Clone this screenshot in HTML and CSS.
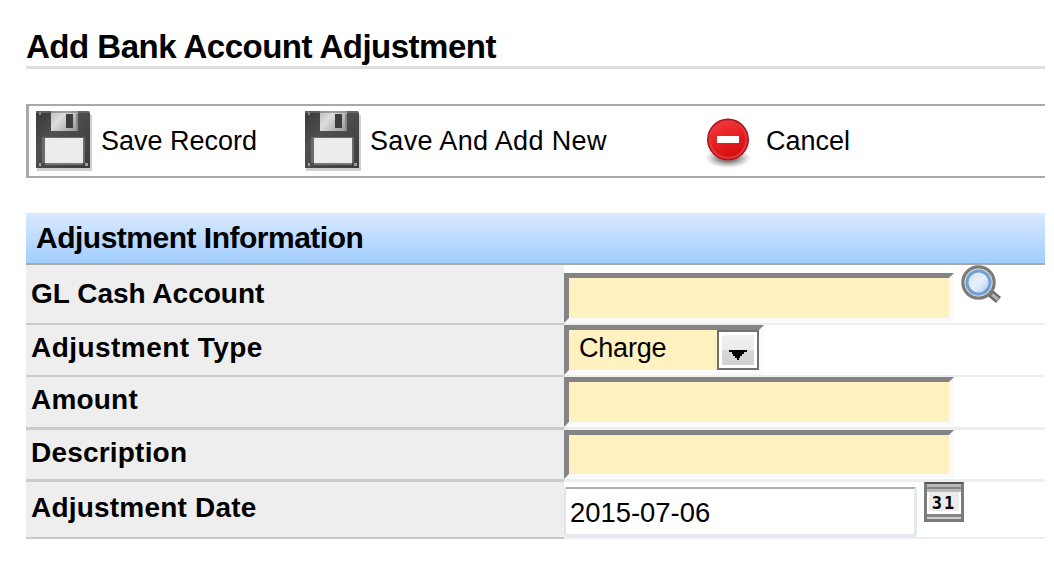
FILE: index.html
```
<!DOCTYPE html>
<html lang="en">
<head>
  <meta charset="UTF-8" />
  <meta name="viewport" content="width=device-width, initial-scale=1.0" />
  <title>Add Bank Account Adjustment</title>
  <link rel="stylesheet" href="styles.css">
</head>
<body>
  <svg class="defs" width="0" height="0">
    <defs>
      <linearGradient id="shutter" x1="0" x2="1" y1="0" y2="0.6">
        <stop offset="0" stop-color="#bdbdbd" />
        <stop offset="0.4" stop-color="#dcdcda" />
        <stop offset="1" stop-color="#a5a5a5" />
      </linearGradient>
      <linearGradient id="disk" x1="0" x2="1" y1="0" y2="1">
        <stop offset="0" stop-color="#383838" />
        <stop offset="0.35" stop-color="#505050" />
        <stop offset="1" stop-color="#3c3c3c" />
      </linearGradient>
      <symbol id="floppy" viewBox="0 0 57 60">
        <path d="M1 4H56V60H1z" fill="#c4c4c4" opacity=".8" />
        <path d="M0 0H52L54 2V57H0z" fill="url(#disk)" />
        <path d="M15 0H42V20H15z" fill="url(#shutter)" />
        <path d="M0 0H54V2H0z" fill="#777" opacity=".6" />
        <path d="M3 1h2v3H3zM40 3h2v17h-2z" fill="#888" />
        <path d="M30 3H37V17H30z" fill="#3d3d3d" />
        <path d="M6 26H49V52H6z" fill="#6b6b6b" />
        <path d="M9 27H47V52H9z" fill="#ececec" />
        <path d="M9 52H47V54H9z" fill="#777" />
        <path d="M3 52h2v3H3zM49 52h3v3h-3z" fill="#a0a0a0" />
      </symbol>
    </defs>
  </svg>

  <div class="page">
    <h1>Add Bank Account Adjustment</h1>

    <div class="toolbar">
      <a class="tool save">
        <svg width="57" height="60"><use href="#floppy" /></svg>
        <span>Save Record</span>
      </a>
      <a class="tool save-new">
        <svg width="57" height="60"><use href="#floppy" /></svg>
        <span>Save And Add New</span>
      </a>
      <a class="tool cancel">
        <svg width="48" height="52" viewBox="0 0 48 52">
          <defs>
            <linearGradient id="red" x1="0" x2="0.4" y1="0" y2="1">
              <stop offset="0" stop-color="#f63a3a" />
              <stop offset="1" stop-color="#d90d12" />
            </linearGradient>
            <radialGradient id="shade">
              <stop offset="0.4" stop-color="#555" stop-opacity=".7" />
              <stop offset="1" stop-color="#888" stop-opacity="0" />
            </radialGradient>
          </defs>
          <ellipse cx="24" cy="41" rx="23" ry="10" fill="url(#shade)" />
          <circle cx="24" cy="22.500" r="21" fill="#b5151a" />
          <circle cx="24" cy="22.500" r="18.300" fill="url(#red)" stroke="#de3a3d" stroke-width="2" />
          <path d="M13 19H35V26H13z" fill="#fff" />
        </svg>
        <span>Cancel</span>
      </a>
    </div>

    <form class="section">
      <h2>Adjustment Information</h2>

      <div class="row account">
        <label>GL Cash Account</label>
        <div class="value">
          <input class="field" type="text" />
          <svg class="search" width="41" height="40" viewBox="0 0 41 40">
            <defs>
              <linearGradient id="lens" x1="0" x2="1" y1="0" y2="1">
                <stop offset="0" stop-color="#c9ddf3" />
                <stop offset="0.5" stop-color="#e9f1fb" />
                <stop offset="1" stop-color="#a9c7ea" />
              </linearGradient>
            </defs>
            <path d="M28 27L37.500 35" stroke="#6c6c68" stroke-width="8" />
            <path d="M31 29.500L37 34.500" stroke="#b4b4b0" stroke-width="3" />
            <circle cx="17.500" cy="17.500" r="15.500" fill="#fff" stroke="#7b7b77" stroke-width="3.500" />
            <circle cx="17.500" cy="17.500" r="13.300" fill="none" stroke="#d5d5d2" stroke-width="1.500" />
            <circle cx="17.500" cy="17.500" r="11.500" fill="url(#lens)" stroke="#719fd4" stroke-width="3" />
          </svg>
        </div>
      </div>

      <div class="row type">
        <label>Adjustment Type</label>
        <div class="value">
          <div class="select">
            <span>Charge</span>
            <div class="arrow">
              <svg width="18" height="10" viewBox="0 0 18 10">
                <path d="M0 0H18V2H15V4H13V6H11V8H10V10H8V8H6V6H4V4H3V2H0z" />
              </svg>
            </div>
          </div>
        </div>
      </div>

      <div class="row amount">
        <label>Amount</label>
        <div class="value"><input class="field" type="text" /></div>
      </div>

      <div class="row description">
        <label>Description</label>
        <div class="value"><input class="field" type="text" /></div>
      </div>

      <div class="row date">
        <label>Adjustment Date</label>
        <div class="value">
          <input class="date-field" type="text" value="2015-07-06" />
          <div class="calendar"><span>31</span></div>
        </div>
      </div>
    </form>
  </div>
</body>
</html>
```
FILE: styles.css
```
* {
  box-sizing: border-box;
}

body {
  margin: 0;
  background: #fff;
  color: #000;
  font-family: "Liberation Sans", Arial, sans-serif;
  overflow: hidden;
}

.defs {
  display: block;
}

.page {
  margin: 28px 9px 0 26px;
}

h1 {
  height: 41px;
  margin: 0 0 35px;
  border-bottom: 3px solid #ddd;
  font-size: 33px;
  line-height: 38px;
  letter-spacing: -0.5px;
  white-space: nowrap;
}

.toolbar {
  display: flex;
  height: 74px;
  margin-bottom: 35px;
  padding-left: 7px;
  border: 2px solid #a9a9a9;
  border-left-width: 3px;
  border-right: none;
  font-size: 27px;
}

.tool {
  display: flex;
  align-items: center;
  white-space: nowrap;
}

.tool svg {
  margin-right: 8px;
}

.save {
  width: 269px;
}

.save-new {
  width: 399px;
  letter-spacing: 0.35px;
}

.cancel svg {
  margin: 3px 14px 0 0;
}

h2 {
  height: 52px;
  margin: 0;
  padding-left: 10px;
  border-bottom: 2px solid #a9a9a9;
  background: linear-gradient(#d9eaff, #a2cdff) padding-box;
  font-size: 30px;
  line-height: 49px;
  letter-spacing: -0.5px;
}

.row {
  display: grid;
  grid-template-columns: 538px 1fr;
  height: 52px;
}

.row label {
  display: flex;
  align-items: center;
  padding: 0 0 4px 5px;
  border-bottom: 2px solid #cacaca;
  background: #eee;
  font-size: 28px;
  font-weight: bold;
  letter-spacing: 0.2px;
}

.value {
  display: flex;
  align-items: flex-end;
  border-bottom: 2px solid #eee;
}

.account {
  height: 60px;
}

.account label {
  padding-bottom: 1px;
  letter-spacing: 0;
}

.type label {
  letter-spacing: 0.45px;
}

.amount {
  height: 53px;
}

.description {
  height: 52px;
}

.date {
  height: 57px;
}

.amount label,
.amount .value,
.description label,
.description .value {
  border-bottom-width: 3px;
}

.field {
  width: 390px;
  height: 100%;
  padding: 0 10px;
  border: 5px solid #fafafa;
  border-top-color: #848484;
  border-left-color: #848484;
  border-radius: 0;
  background: #fff2c0;
  font: 27px "Liberation Sans", Arial, sans-serif;
  outline: none;
}

.account .field {
  height: 50px;
}

.search {
  align-self: flex-start;
  margin-left: 7px;
}

.select {
  display: flex;
  justify-content: space-between;
  width: 200px;
  height: 50px;
  padding-left: 10px;
  border: 5px solid #fafafa;
  border-top-color: #848484;
  border-left-color: #848484;
  background: #fff2c0;
  font-size: 27px;
  line-height: 37px;
  letter-spacing: -0.2px;
}

.arrow {
  display: flex;
  justify-content: center;
  width: 42px;
  height: 40px;
  padding-top: 15px;
  border: 2px solid #707070;
  background: linear-gradient(#f2f2f2, #ebebeb 50%, #d9d9d9 50%, #cfcfcf);
  box-shadow: inset 0 0 0 3px #fff;
}

.arrow svg {
  margin-top: 3px;
}

.date-field {
  width: 353px;
  height: 50px;
  padding: 2px 5px 0 4px;
  border: 3px solid #e3e9ef;
  border-top: 2px solid #abadb3;
  border-left: 2px solid #e2e3ea;
  border-radius: 3px;
  background: #fff;
  font: 27.4px "Liberation Sans", Arial, sans-serif;
  outline: none;
}

.calendar {
  align-self: flex-start;
  width: 40px;
  height: 40px;
  margin-left: 7px;
  border: 3px solid #7b7b7b;
  border-top: 2px solid #555550;
  background: linear-gradient(#b9b9b9 0 3px, #858585 3px 5px, #b9b9b9 5px 8px, #ececec 8px 27px, #fff 27px 30px, #858585 30px 33px, #d0d0d0 33px);
}

.calendar span {
  display: block;
  height: 22px;
  margin-top: 8px;
  border: solid #fff;
  border-width: 0 2px;
  font: bold 17px/22px "DejaVu Sans Mono", monospace;
  letter-spacing: 2px;
  text-align: center;
}
```
